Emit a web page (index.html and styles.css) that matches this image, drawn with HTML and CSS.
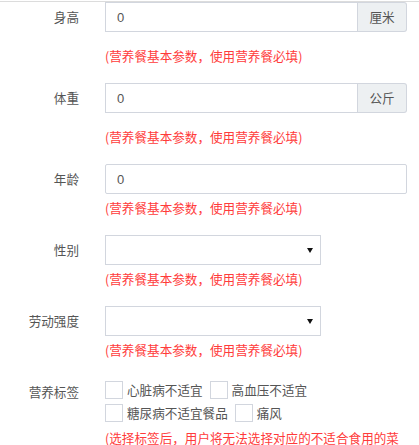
FILE: index.html
```html
<!DOCTYPE html>
<html lang="zh-CN">

<head>
    <meta charset="UTF-8">
    <title>营养参数</title>
    <link rel="stylesheet" href="styles.css">
</head>

<body>
    <div class="top-rule"></div>

    <form class="nutri-form">
        <!-- 身高 -->
        <div class="form-row">
            <label class="row-label">身高</label>
            <div class="row-control">
                <div class="input-group">
                    <input type="text" class="text-input" value="0">
                    <span class="addon">厘米</span>
                </div>
                <p class="hint hint-gap">(营养餐基本参数，使用营养餐必填)</p>
            </div>
        </div>

        <!-- 体重 -->
        <div class="form-row">
            <label class="row-label">体重</label>
            <div class="row-control">
                <div class="input-group">
                    <input type="text" class="text-input" value="0">
                    <span class="addon">公斤</span>
                </div>
                <p class="hint hint-gap">(营养餐基本参数，使用营养餐必填)</p>
            </div>
        </div>

        <!-- 年龄 -->
        <div class="form-row">
            <label class="row-label">年龄</label>
            <div class="row-control">
                <input type="text" class="text-input full" value="0">
                <p class="hint">(营养餐基本参数，使用营养餐必填)</p>
            </div>
        </div>

        <!-- 性别 -->
        <div class="form-row">
            <label class="row-label">性别</label>
            <div class="row-control">
                <div class="select-box">
                    <svg class="caret" width="6" height="5" viewBox="0 0 6 5"><path d="M0 0H6L3 5Z" fill="#111"/></svg>
                </div>
                <p class="hint">(营养餐基本参数，使用营养餐必填)</p>
            </div>
        </div>

        <!-- 劳动强度 -->
        <div class="form-row">
            <label class="row-label">劳动强度</label>
            <div class="row-control">
                <div class="select-box">
                    <svg class="caret" width="6" height="5" viewBox="0 0 6 5"><path d="M0 0H6L3 5Z" fill="#111"/></svg>
                </div>
                <p class="hint">(营养餐基本参数，使用营养餐必填)</p>
            </div>
        </div>

        <!-- 营养标签 -->
        <div class="form-row">
            <label class="row-label">营养标签</label>
            <div class="row-control">
                <div class="tag-list">
                    <span class="tag"><i class="check"></i>心脏病不适宜</span>
                    <span class="tag"><i class="check"></i>高血压不适宜</span>
                    <span class="tag"><i class="check"></i>糖尿病不适宜餐品</span>
                    <span class="tag"><i class="check"></i>痛风</span>
                </div>
                <p class="hint">(选择标签后，用户将无法选择对应的不适合食用的菜品)</p>
            </div>
        </div>
    </form>
</body>

</html>
```

FILE: styles.css
```css
/* Basic styling */
body {
    margin: 0;
    padding: 0;
    background: #fff;
    color: #555;
    font-family: "Noto Sans CJK SC", "Liberation Sans", sans-serif;
    font-size: 12.6px;
    overflow: hidden;
}

.top-rule {
    margin-top: 1px;
    border-top: 1px solid #dcdcdc;
}

.nutri-form {
    margin: 0;
    padding: 0;
}

.form-row {
    display: flex;
    align-items: flex-start;
    margin-bottom: 18px;
}

.row-label {
    width: 79px;
    margin-right: 26px;
    text-align: right;
    line-height: 30px;
    color: #555;
}

.row-control {
    width: 302px;
}

/* text inputs */
.input-group {
    display: flex;
    margin-bottom: 10px;
}

.text-input {
    box-sizing: border-box;
    flex: 1;
    height: 30px;
    margin: 0;
    padding: 0 11px;
    border: 1px solid #d2d6de;
    border-radius: 0;
    font-family: "Liberation Sans", sans-serif;
    font-size: 13px;
    color: #555;
    outline: none;
}

.text-input.full {
    display: block;
    width: 100%;
    border-radius: 2px;
}

.addon {
    box-sizing: border-box;
    width: 49px;
    height: 30px;
    line-height: 28px;
    text-align: center;
    border: 1px solid #d2d6de;
    border-left: none;
    border-radius: 0 3px 3px 0;
    background: #edf0f2;
    color: #555;
}

/* select look */
.select-box {
    box-sizing: border-box;
    width: 216px;
    height: 30px;
    border: 1px solid #d2d6de;
    display: flex;
    align-items: center;
    justify-content: flex-end;
    padding-right: 7px;
}

/* hint lines */
.hint {
    margin: 5px 0 0;
    line-height: 18px;
    color: #ff3b3b;
}

.hint-gap {
    margin-top: 15px;
}

/* checkbox tags */
.tag-list {
    display: flex;
    flex-wrap: wrap;
    width: 210px;
    padding-top: 1px;
}

.tag {
    display: flex;
    align-items: center;
    height: 23px;
    margin-right: 7px;
    color: #555;
}

.check {
    box-sizing: border-box;
    width: 18px;
    height: 18px;
    margin-right: 4px;
    border: 1px solid #d2d6de;
    background: #fff;
}
```
